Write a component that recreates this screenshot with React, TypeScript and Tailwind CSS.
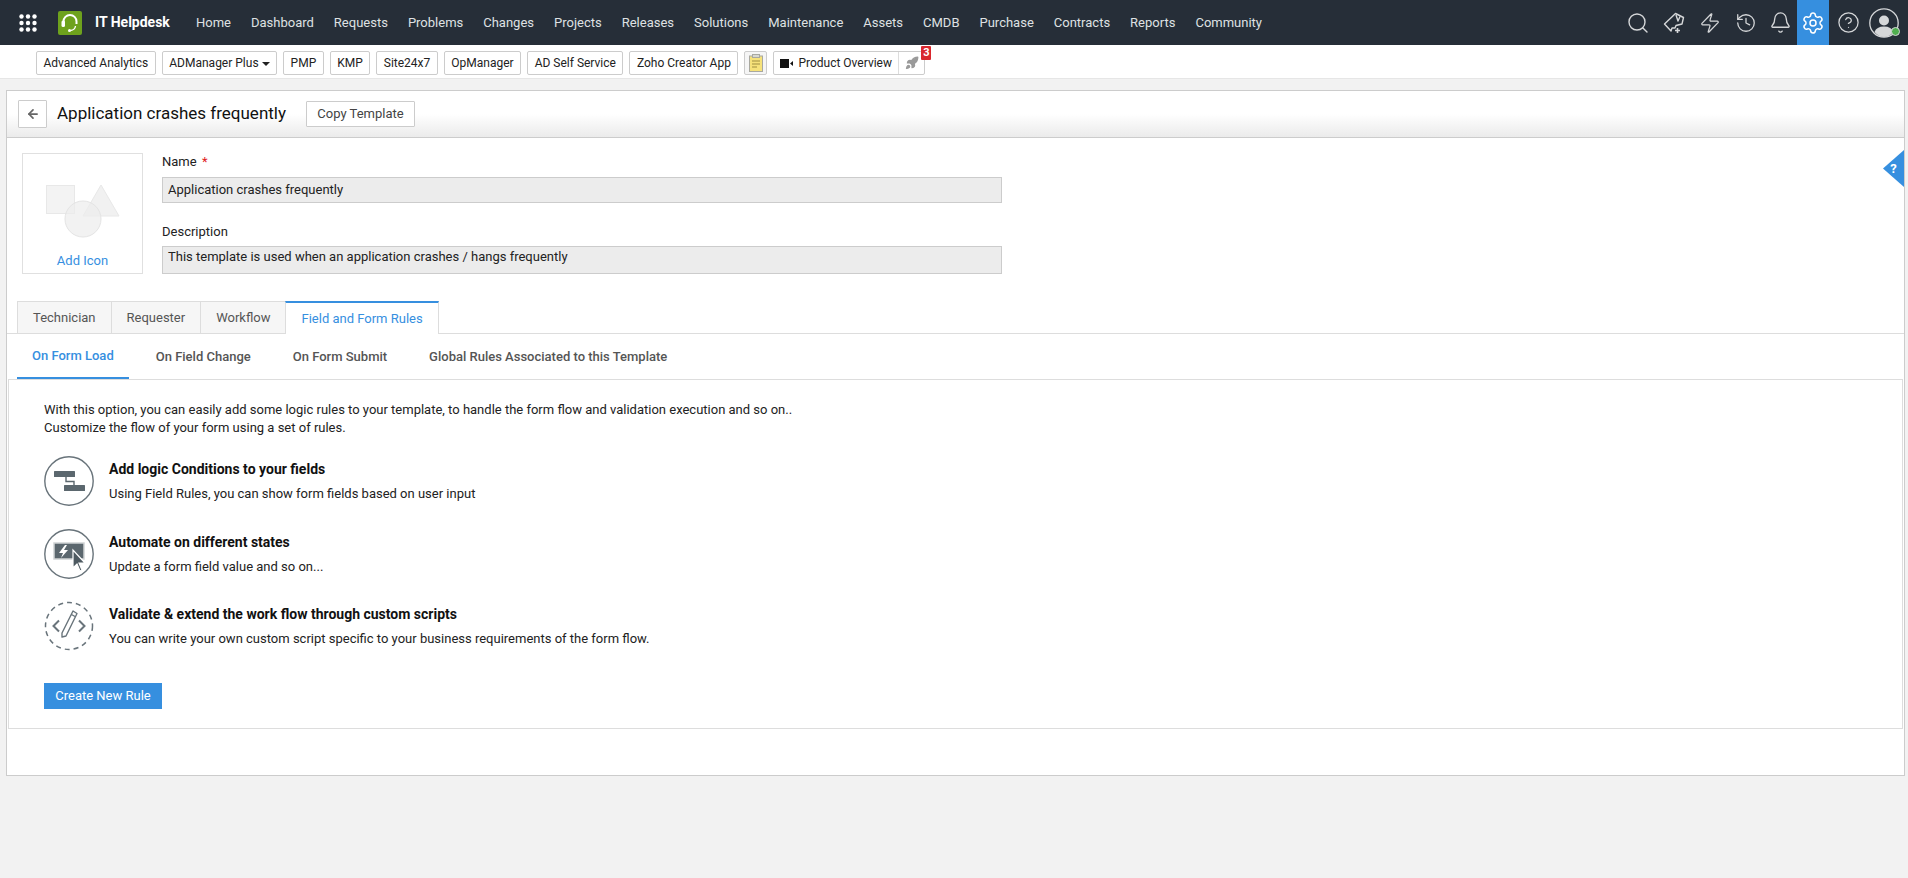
import { Search, Zap, History, Bell, Settings, CircleHelp, Rocket, ArrowLeft } from 'lucide-react';

const navItems = ['Home', 'Dashboard', 'Requests', 'Problems', 'Changes', 'Projects', 'Releases', 'Solutions', 'Maintenance', 'Assets', 'CMDB', 'Purchase', 'Contracts', 'Reports', 'Community'];
const quickLinks = ['Advanced Analytics', 'PMP', 'KMP', 'Site24x7', 'OpManager', 'AD Self Service', 'Zoho Creator App'];
const mainTabs = ['Technician', 'Requester', 'Workflow'];
const subTabs = ['On Field Change', 'On Form Submit', 'Global Rules Associated to this Template'];

function GridIcon() {
  return (
    <svg width="18" height="18" viewBox="0 0 18 18" fill="#fff">
      {[2.5, 9, 15.5].map((y) =>
        [2.5, 9, 15.5].map((x) => <circle key={`${x}-${y}`} cx={x} cy={y} r="2.2" />),
      )}
    </svg>
  );
}

function Logo() {
  return (
    <svg width="24" height="24" viewBox="0 0 24 24">
      <rect width="24" height="24" rx="2" fill="#6ea21d" />
      <path d="M5.5 13 V10.5 a6.5 6.5 0 0 1 13 0 V13" fill="none" stroke="#fff" strokeWidth="2" />
      <rect x="3.5" y="9.5" width="3.5" height="6.5" rx="1.5" fill="#fff" />
      <path d="M17.5 15 q-0.5 4 -5 4.5" fill="none" stroke="#fff" strokeWidth="1.3" />
      <circle cx="11.5" cy="19.5" r="1.5" fill="#fff" />
    </svg>
  );
}

function TagPlus() {
  return (
    <svg width="22" height="22" viewBox="0 0 22 22" fill="none" stroke="#d5d7d9" strokeWidth="1.4" strokeLinejoin="round">
      <path d="M1.5 12 L12.5 1.5 L20.5 5.5 L19 12 L13 13.5 L12 16 H9 L8 19 Z" />
      <path d="M13 3 L15 9 L17 4.5" />
      <path d="M14.5 16 V21 M12 18.5 H17" strokeWidth="1.6" />
    </svg>
  );
}

function Avatar() {
  return (
    <div className="relative h-[30px] w-[30px]">
      <svg width="30" height="30" viewBox="0 0 30 30">
        <circle cx="15" cy="15" r="14.2" fill="none" stroke="#d5d7d9" strokeWidth="1.3" />
        <circle cx="15" cy="12.5" r="5" fill="#d5d7d9" />
        <path d="M5.5 24 q2-5.5 9.5-5.5 t9.5 5.5 q-4 5-9.5 5 t-9.5-5z" fill="#d5d7d9" />
      </svg>
      <span className="absolute bottom-[2px] right-[-1px] h-[9px] w-[9px] rounded-full border border-[#d5d7d9] bg-[#4fae4f]" />
    </div>
  );
}

function Clipboard() {
  return (
    <svg width="14" height="18" viewBox="0 0 14 18">
      <rect x="0.5" y="2" width="13" height="15.5" fill="#f6e27a" stroke="#a8a8a0" />
      <rect x="3.5" y="0.5" width="7" height="3" fill="#d8d8d0" stroke="#a8a8a0" />
      <path d="M3 7 H11 M3 10 H11 M3 13 H8" stroke="#a08f40" strokeWidth="1" />
    </svg>
  );
}

function VideoIcon() {
  return (
    <svg width="13" height="9" viewBox="0 0 13 9" fill="#111">
      <rect width="9" height="9" />
      <path d="M10 4.5 L13 2 V7 Z" />
    </svg>
  );
}

function ShapesIcon() {
  return (
    <svg width="74" height="54" viewBox="0 0 74 54">
      <rect x="0.5" y="1.5" width="28" height="28" fill="#f3f3f3" stroke="#e8e8e8" />
      <path d="M55 1 L73 32 H37 Z" fill="#f1f1f1" stroke="#e8e8e8" />
      <circle cx="37" cy="35" r="18" fill="#ececec" fillOpacity="0.7" stroke="#e4e4e4" />
    </svg>
  );
}

function RuleIcon() {
  return (
    <svg width="50" height="50" viewBox="0 0 50 50">
      <circle cx="25" cy="25" r="24.2" fill="none" stroke="#69747b" strokeWidth="1.4" />
      <rect x="10" y="15" width="21" height="6" rx="0.5" fill="#5b676e" />
      <rect x="20" y="29" width="21" height="6" rx="0.5" fill="#5b676e" />
      <path d="M22 21 V25.5 H30 V29" fill="none" stroke="#5b676e" strokeWidth="1.4" />
    </svg>
  );
}

function AutomateIcon() {
  return (
    <svg width="50" height="50" viewBox="0 0 50 50">
      <circle cx="25" cy="25" r="24.2" fill="none" stroke="#69747b" strokeWidth="1.4" />
      <rect x="10" y="14" width="30" height="16" fill="#5b676e" stroke="#d0d3d5" strokeWidth="1.5" />
      <path d="M21 16 L15 24 H19 L17 29 L24 21 H20 L23 16 Z" fill="#fff" />
      <path d="M29 21 V39 L33 35 L36 42 L38 41 L35 34 L41 34 Z" fill="#4e5a61" stroke="#fff" strokeWidth="1.2" />
    </svg>
  );
}

function ScriptIcon() {
  return (
    <svg width="50" height="50" viewBox="0 0 50 50" fill="none" stroke="#69747b">
      <circle cx="25" cy="25" r="23.5" strokeWidth="1.5" strokeDasharray="5 4" />
      <path d="M15 19.5 L9.5 25 L15 30.5 M35 19.5 L40.5 25 L35 30.5" strokeWidth="2" />
      <path d="M29 10 L33 12.5 L22 35 L18 36 L18 32 Z M27.5 13.5 L31 15.5" strokeWidth="1.4" strokeLinejoin="round" />
    </svg>
  );
}

function QuickLink({ label, caret }: { label: string; caret?: boolean }) {
  return (
    <button className="flex h-[24px] items-center rounded-[2px] border border-[#ccc] bg-white px-[6.5px] text-[12px] text-[#222]">
      {label}
      {caret && <span className="ml-[3px] mt-[2px] border-x-[4px] border-t-[4px] border-x-transparent border-t-[#222]" />}
    </button>
  );
}

function FeatureRow({ icon, title, text }: { icon: React.ReactNode; title: string; text: string }) {
  return (
    <div className="flex h-[50px] items-center gap-[15px]">
      {icon}
      <div>
        <div className="text-[14px] leading-[20px] font-bold text-[#111]">{title}</div>
        <div className="mt-[6px] text-[13px] leading-[18px] text-[#222]">{text}</div>
      </div>
    </div>
  );
}

export default function App() {
  return (
    <div className="flex h-[878px] flex-col overflow-hidden bg-[#f2f2f2] font-['Roboto',sans-serif] text-[13px] text-[#222]">
      {/* top nav */}
      <header className="flex h-[45px] shrink-0 items-center bg-[#262e38]">
        <div className="ml-[19px] flex w-[39px] shrink-0">
          <GridIcon />
        </div>
        <Logo />
        <span className="ml-[13px] w-[80px] shrink-0 text-[14px] font-bold text-white">IT Helpdesk</span>
        <nav className="ml-[21px] flex gap-[20px] text-[13px] text-[#dfe1e3]">
          {navItems.map((item) => (
            <span key={item}>{item}</span>
          ))}
        </nav>
        <div className="ml-auto flex h-full items-center text-[#d5d7d9]">
          <div className="flex w-[35px] justify-center"><Search size={24} strokeWidth={1.4} /></div>
          <div className="flex w-[37px] justify-center"><TagPlus /></div>
          <div className="flex w-[36px] justify-center"><Zap size={22} strokeWidth={1.4} /></div>
          <div className="flex w-[35px] justify-center"><History size={22} strokeWidth={1.4} /></div>
          <div className="flex w-[34px] justify-center"><Bell size={23} strokeWidth={1.4} /></div>
          <div className="flex h-full w-[32px] items-center justify-center bg-[#368fdf] text-white"><Settings size={24} strokeWidth={1.5} /></div>
          <div className="flex w-[38px] justify-center"><CircleHelp size={23} strokeWidth={1.3} /></div>
          <div className="ml-[2px] mr-[9px] w-[30px]"><Avatar /></div>
        </div>
      </header>

      {/* quick links */}
      <div className="flex h-[34px] shrink-0 items-start gap-[6px] border-b border-[#e6e6e6] bg-white pl-[36px] pt-[6px]">
        <QuickLink label={quickLinks[0]} />
        <QuickLink label="ADManager Plus" caret />
        {quickLinks.slice(1).map((label) => (
          <QuickLink key={label} label={label} />
        ))}
        <div className="flex h-[24px] w-[23px] items-center justify-center rounded-[2px] border border-[#ccc] bg-[#f5f5f5]">
          <Clipboard />
        </div>
        <div className="relative flex h-[24px] w-[152px] items-center rounded-[2px] border border-[#ccc] bg-white pl-[6px] text-[12px]">
          <VideoIcon />
          <span className="ml-[5px]">Product Overview</span>
          <span className="ml-[6px] flex h-full flex-1 items-center justify-center border-l border-[#ddd]">
            <Rocket size={14} fill="#9a9a9a" stroke="#9a9a9a" />
          </span>
          <span className="absolute right-[-7px] top-[-6px] flex h-[14px] w-[10px] items-center justify-center rounded-[1px] bg-[#d9272e] text-[11px] font-bold text-white">3</span>
        </div>
      </div>

      {/* card */}
      <div className="ml-[6px] mr-[3px] mt-[11px] flex h-[686px] flex-col border border-[#ccc] bg-white">
        <div className="flex h-[47px] shrink-0 items-center border-b border-[#ccc] bg-gradient-to-b from-white from-50% to-[#ebebeb] pl-[11px]">
          <button className="flex h-[28px] w-[29px] items-center justify-center rounded-[1px] border border-[#ccc] bg-white text-[#666]">
            <ArrowLeft size={14} strokeWidth={3} />
          </button>
          <h1 className="ml-[10px] text-[17px] font-normal text-[#111]">Application crashes frequently</h1>
          <button className="ml-[20px] h-[26px] w-[109px] rounded-[1px] border border-[#ccc] bg-white text-[13px] text-[#444]">Copy Template</button>
        </div>

        <div className="relative flex pl-[15px] pt-[15px]">
          <div className="flex h-[121px] w-[121px] shrink-0 flex-col items-center border border-[#e0e0e0] pt-[30px]">
            <ShapesIcon />
            <span className="mt-[13px] text-[13px] text-[#368fdf]">Add Icon</span>
          </div>
          <div className="ml-[19px] w-[840px]">
            <label className="block text-[13px] leading-[18px] text-[#222]">
              Name <span className="ml-[2px] text-[#e02020]">*</span>
            </label>
            <div className="mt-[6px] flex h-[26px] items-center border border-[#ccc] bg-[#ececec] pl-[5px] text-[13px]">Application crashes frequently</div>
            <label className="mt-[20px] block text-[13px] leading-[18px] text-[#222]">Description</label>
            <div className="mt-[5px] h-[28px] border border-[#ccc] bg-[#ececec] pl-[5px] pt-[1px] text-[13px] leading-[18px]">This template is used when an application crashes / hangs frequently</div>
          </div>
          <div className="absolute right-0 top-[12px] h-[37px] w-[21px] bg-[#368fdf] text-center text-[13px] font-bold leading-[37px] text-white [clip-path:polygon(0_50%,100%_0,100%_100%)]">?</div>
        </div>

        {/* main tabs */}
        <div className="mt-[27px] flex h-[33px] shrink-0 border-b border-[#ddd] pl-[10px]">
          {mainTabs.map((tab) => (
            <div key={tab} className="flex h-[32px] items-center border border-b-0 border-r-0 border-[#ddd] bg-[#f6f6f6] px-[15px] text-[13px] text-[#555]">{tab}</div>
          ))}
          <div className="flex h-[33px] items-center border-x border-t-2 border-[#ddd] border-t-[#368fdf] bg-white px-[15px] text-[13px] text-[#368fdf]">Field and Form Rules</div>
        </div>

        {/* sub tabs */}
        <div className="flex h-[45px] shrink-0 pl-[10px] text-[13px] font-medium text-[#555]">
          <div className="flex items-center border-b-2 border-[#368fdf] px-[15px] text-[#368fdf]">On Form Load</div>
          {subTabs.map((tab) => (
            <div key={tab} className="ml-[12px] flex items-center px-[15px]">{tab}</div>
          ))}
        </div>

        <div className="mx-px flex h-[350px] flex-col border border-[#ddd] pl-[35px] pt-[21px]">
          <p className="text-[13px] leading-[18px]">
            With this option, you can easily add some logic rules to your template, to handle the form flow and validation execution and so on..
            <br />
            Customize the flow of your form using a set of rules.
          </p>
          <div className="mt-[19px] flex flex-col gap-[22.5px]">
            <FeatureRow icon={<RuleIcon />} title="Add logic Conditions to your fields" text="Using Field Rules, you can show form fields based on user input" />
            <FeatureRow icon={<AutomateIcon />} title="Automate on different states" text="Update a form field value and so on..." />
            <FeatureRow icon={<ScriptIcon />} title="Validate & extend the work flow through custom scripts" text="You can write your own custom script specific to your business requirements of the form flow." />
          </div>
          <button className="mt-[32px] h-[26px] w-[118px] bg-[#368fdf] text-[13px] text-white">Create New Rule</button>
        </div>
      </div>
    </div>
  );
}
